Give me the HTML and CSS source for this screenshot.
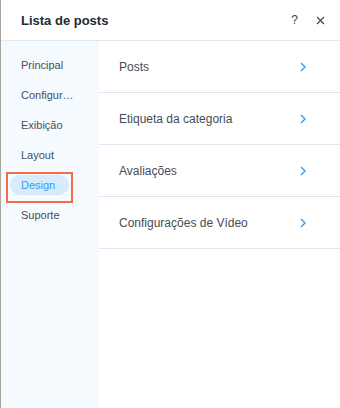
FILE: index.html
```html
<!DOCTYPE html>
<html lang="pt">
<head>
<meta charset="utf-8">
<title>Lista de posts</title>
<link rel="stylesheet" href="styles.css">
</head>
<body>
<div class="panel">
  <header class="header">
    <h1 class="title">Lista de posts</h1>
    <div class="actions">
      <span class="help">?</span>
      <svg class="close" width="9" height="9" viewBox="0 0 9 9"><path d="M1 1 L8 8 M8 1 L1 8" stroke="#3b4057" stroke-width="1.1" fill="none"/></svg>
    </div>
  </header>
  <div class="content">
    <nav class="sidebar">
      <div class="nav-item">Principal</div>
      <div class="nav-item">Configur…</div>
      <div class="nav-item">Exibição</div>
      <div class="nav-item">Layout</div>
      <div class="nav-item active"><span class="pill">Design</span><span class="highlight"></span></div>
      <div class="nav-item">Suporte</div>
    </nav>
    <main class="main">
      <div class="row"><span>Posts</span><svg class="chev" width="6" height="10" viewBox="0 0 6 10"><path d="M1 1 L5 5 L1 9" stroke="#3899ec" stroke-width="1.4" fill="none"/></svg></div>
      <div class="row"><span>Etiqueta da categoria</span><svg class="chev" width="6" height="10" viewBox="0 0 6 10"><path d="M1 1 L5 5 L1 9" stroke="#3899ec" stroke-width="1.4" fill="none"/></svg></div>
      <div class="row"><span>Avaliações</span><svg class="chev" width="6" height="10" viewBox="0 0 6 10"><path d="M1 1 L5 5 L1 9" stroke="#3899ec" stroke-width="1.4" fill="none"/></svg></div>
      <div class="row"><span>Configurações de Vídeo</span><svg class="chev" width="6" height="10" viewBox="0 0 6 10"><path d="M1 1 L5 5 L1 9" stroke="#3899ec" stroke-width="1.4" fill="none"/></svg></div>
    </main>
  </div>
</div>
</body>
</html>
```
FILE: styles.css
```css
html, body {
  margin: 0;
  padding: 0;
  background: #ffffff;
}
body {
  font-family: "Liberation Sans", Arial, sans-serif;
}
.panel {
  width: 340px;
  height: 408px;
  box-sizing: border-box;
  border-left: 1px solid #aaa59c;
  display: flex;
  flex-direction: column;
  background: #fff;
}
.header {
  height: 40px;
  flex: none;
  border-bottom: 1px solid #e3e8ee;
  display: flex;
  align-items: center;
  justify-content: space-between;
  padding: 0 15px 0 20px;
}
.title {
  margin: 0;
  font-size: 13px;
  font-weight: bold;
  color: #1c2b36;
}
.actions {
  display: flex;
  align-items: center;
  gap: 18px;
}
.help {
  font-size: 12px;
  color: #3b4057;
}
.close {
  display: block;
}
.content {
  flex: 1;
  display: flex;
}
.sidebar {
  width: 98px;
  flex: none;
  background: #f5faff;
  padding-top: 9px;
  display: flex;
  flex-direction: column;
}
.nav-item {
  height: 30px;
  display: flex;
  align-items: center;
  padding-left: 20px;
  font-size: 11px;
  color: #45505c;
  position: relative;
}
.nav-item.active {
  padding-left: 9px;
}
.pill {
  background: #d6ebfe;
  color: #3899ec;
  border-radius: 10px;
  height: 20px;
  line-height: 20px;
  padding: 0 11px 0 11px;
  width: 37px;
}
.highlight {
  position: absolute;
  left: 5px;
  top: 2px;
  width: 63px;
  height: 27px;
  border: 2px solid #f26b4a;
}
.main {
  flex: 1;
  display: flex;
  flex-direction: column;
}
.row {
  height: 51px;
  border-bottom: 1px solid #dfe5eb;
  display: flex;
  align-items: center;
  justify-content: space-between;
  padding: 0 34px 0 20px;
  font-size: 12px;
  color: #444c56;
}
.chev {
  display: block;
}
```
